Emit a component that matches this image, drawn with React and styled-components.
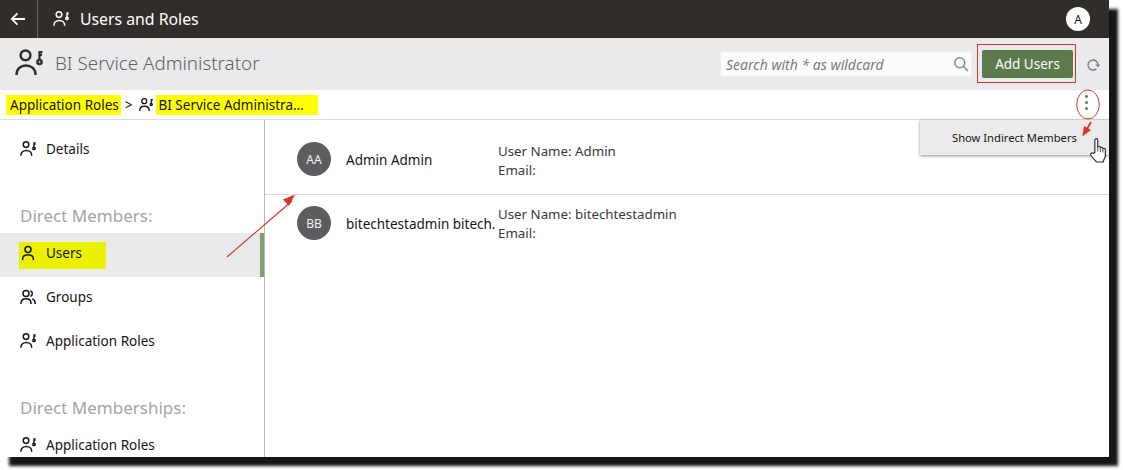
import React from 'react'
import styled, { createGlobalStyle } from 'styled-components'

const Global = createGlobalStyle`
   html, body {
      margin: 0;
      height: 470px;
      background: #fff;
   }
   html {
      overflow: hidden;
   }
   body {
      font-family: "Noto Sans", "Open Sans", sans-serif;
      color: #161513;
   }
`

const UserKey = ({ size = 16, color = 'currentColor', stroke = 1.5 }) => (
   <svg width={size} height={size} viewBox="0 0 16 16" fill="none" stroke={color} strokeWidth={stroke}>
      <circle cx="6" cy="3.6" r="2.8" />
      <path d="M.9 14.8v-.4c0-3 2.3-5 5.4-5s5.4 2 5.4 5v.4" />
      <circle cx="14" cy="7.4" r="1.2" />
      <path d="M14 6V1.2M14 1.8h1.7M14 3.4h1.4" strokeWidth={stroke * 0.9} />
   </svg>
)

const UserIcon = () => (
   <svg width="16" height="16" viewBox="0 0 16 16" fill="none" stroke="currentColor" strokeWidth="1.5">
      <circle cx="8" cy="4.6" r="3" />
      <path d="M2.6 15v-.8c0-2.8 2.4-4.4 5.4-4.4s5.4 1.6 5.4 4.4v.8" />
   </svg>
)

const GroupIcon = () => (
   <svg width="16" height="16" viewBox="0 0 16 16" fill="none" stroke="currentColor" strokeWidth="1.5">
      <circle cx="6" cy="4.6" r="3" />
      <path d="M1 15v-.8c0-2.8 2.2-4.4 5-4.4s5 1.6 5 4.4v.8" />
      <path d="M10.4 1.8a3 3 0 0 1 0 5.6M12.2 9.9c1.7.6 2.9 2 2.9 4.3v.8" />
   </svg>
)

const BackArrow = () => (
   <svg width="16" height="14" viewBox="0 0 16 14" fill="none" stroke="#fff" strokeWidth="1.8">
      <path d="M15 7H2M7.4 1.4 1.8 7l5.6 5.6" />
   </svg>
)

const SearchIcon = () => (
   <svg width="16" height="16" viewBox="0 0 16 16" fill="none" stroke="#8a8d8c" strokeWidth="1.5">
      <circle cx="6.8" cy="6.8" r="5" />
      <path d="m10.4 10.4 4.6 4.6" />
   </svg>
)

const RefreshIcon = () => (
   <svg width="14" height="14" viewBox="0 0 14 14" fill="none" stroke="#7d8387" strokeWidth="1.5">
      <path d="M12 7A5 5 0 1 0 10.4 10.7" />
      <path d="M9.4 6.4h5L11.9 9.6Z" fill="#7d8387" stroke="none" />
   </svg>
)

const Annotations = () => (
   <AnnotationLayer viewBox="0 0 1123 470">
      <rect x="977.5" y="44.5" width="98" height="38" stroke="#d9352b" strokeWidth="1" fill="none" />
      <path d="M227 257 292 201" stroke="#d9352b" strokeWidth="1.2" fill="none" />
      <path d="M295 194.5 283 199.5 289 206Z" fill="#d9352b" />
      <ellipse cx="1088" cy="104.5" rx="11.3" ry="14.5" stroke="#d9352b" strokeWidth="1" fill="none" />
      <path d="M1091 122 1087 129" stroke="#d9352b" strokeWidth="1.8" fill="none" />
      <path d="M1082.3 136.5 1084 126 1091 130Z" fill="#d9352b" />
   </AnnotationLayer>
)

const HandCursor = () => (
   <Hand width="19" height="25" viewBox="0 0 18 24">
      <path
         d="M5.5 14V2.2c0-2.1 2.8-2.1 2.8 0V9c0-1.5 2.5-1.5 2.5 0v1c0-1.5 2.4-1.5 2.4 0v1c0-1.4 2.4-1.4 2.4 0v5.6c0 1.7-.7 2.8-1.4 4.1L13.500 23H7l-5.3-6.2c-1.2-1.7.9-3.3 2.3-2z"
         fill="#fff"
         stroke="#2a2a35"
         strokeWidth="1.1"
      />
      <path d="M8.3 9v4M10.8 10v3.5M13.2 11v3" stroke="#2a2a35" strokeWidth=".8" fill="none" />
   </Hand>
)

export default function App() {
   return (
      <Frame>
         <Global />
         <TopBar>
            <BackButton>
               <BackArrow />
            </BackButton>
            <TopTitle>
               <UserKey />
               <span>Users and Roles</span>
            </TopTitle>
            <Avatar>A</Avatar>
         </TopBar>
         <PageHeader>
            <HeaderIcon>
               <UserKey size={28} color="#312d2a" stroke={1.4} />
            </HeaderIcon>
            <PageTitle>BI Service Administrator</PageTitle>
            <SearchBox>
               <SearchText>Search with * as wildcard</SearchText>
               <SearchIcon />
            </SearchBox>
            <AddButton>Add Users</AddButton>
            <RefreshButton>
               <RefreshIcon />
            </RefreshButton>
         </PageHeader>
         <Breadcrumbs>
            <Marked>Application Roles</Marked>
            <Separator>&gt;</Separator>
            <UserKey size={14} />
            <MarkedLong>BI Service Administra…</MarkedLong>
            <MoreButton>
               <Dot />
               <Dot />
               <Dot />
            </MoreButton>
         </Breadcrumbs>
         <Body>
            <Sidebar>
               <NavItem>
                  <UserKey />
                  <span>Details</span>
               </NavItem>
               <NavHeading $height={60} $top={31}>Direct Members:</NavHeading>
               <NavItem $active>
                  <UsersMark>
                     <UserIcon />
                     <span>Users</span>
                  </UsersMark>
               </NavItem>
               <NavItem>
                  <GroupIcon />
                  <span>Groups</span>
               </NavItem>
               <NavItem>
                  <UserKey />
                  <span>Application Roles</span>
               </NavItem>
               <NavHeading $height={60} $top={31}>Direct Memberships:</NavHeading>
               <NavItem>
                  <UserKey />
                  <span>Application Roles</span>
               </NavItem>
            </Sidebar>
            <Members>
               <MemberRow $top={22}>
                  <Initials>AA</Initials>
                  <MemberName>Admin Admin</MemberName>
                  <MemberInfo>
                     <div>User Name: Admin</div>
                     <div>Email:</div>
                  </MemberInfo>
               </MemberRow>
               <MemberRow $top={11} $last>
                  <Initials>BB</Initials>
                  <MemberName>bitechtestadmin bitech.</MemberName>
                  <MemberInfo $shift={-1}>
                     <div>User Name: bitechtestadmin</div>
                     <div>Email:</div>
                  </MemberInfo>
               </MemberRow>
            </Members>
         </Body>
         <Menu>Show Indirect Members</Menu>
         <Annotations />
         <HandCursor />
      </Frame>
   )
}

const Frame = styled.div`
   position: relative;
   width: 1109px;
   height: 457px;
   overflow: hidden;
   display: flex;
   flex-direction: column;
   background: #fff;
   box-shadow: 9px 9px 3px #161616;
`

const TopBar = styled.header`
   height: 38px;
   flex: none;
   display: flex;
   align-items: center;
   background: #312d2a;
   color: #fff;
`

const BackButton = styled.div`
   width: 36px;
   height: 100%;
   display: flex;
   align-items: center;
   justify-content: center;
   border-right: 1px solid #6b6764;
   padding-right: 1px;
`

const TopTitle = styled.div`
   display: flex;
   align-items: center;
   gap: 11px;
   margin-left: 15px;
   font-size: 15.8px;
   flex: 1;
`

const Avatar = styled.div`
   width: 24px;
   height: 24px;
   margin-right: 19px;
   border-radius: 50%;
   background: #fff;
   color: #161513;
   font-size: 12px;
   display: flex;
   align-items: center;
   justify-content: center;
`

const PageHeader = styled.div`
   height: 52px;
   flex: none;
   display: flex;
   align-items: center;
   background: #e9eaec;
`

const HeaderIcon = styled.div`
   margin: 0 0 3px 15px;
   display: flex;
`

const PageTitle = styled.h1`
   flex: 1;
   margin: 0 0 3px 12px;
   font-size: 18.8px;
   font-weight: 300;
   color: #5f6163;
`

const SearchBox = styled.div`
   width: 252px;
   height: 26px;
   box-sizing: border-box;
   padding: 0 2px 0 5px;
   display: flex;
   align-items: center;
   justify-content: space-between;
   background: #fbfbfb;
   border: 1px solid #eeeeee;
   margin-right: 10px;
`

const SearchText = styled.span`
   font-size: 14px;
   font-style: italic;
   color: #7b7b7b;
`

const AddButton = styled.button`
   width: 91px;
   height: 28px;
   margin-right: 3px;
   padding: 0;
   border: none;
   border-radius: 2px;
   background: #5c7a4c;
   color: #fff;
   font: 400 13.5px "Noto Sans", sans-serif;
`

const RefreshButton = styled.div`
   margin: 2px 9px 0 10px;
   display: flex;
`

const Breadcrumbs = styled.nav`
   height: 29px;
   flex: none;
   display: flex;
   align-items: center;
   padding-left: 6px;
   border-bottom: 1px solid #dcdcdc;
   font-size: 13.5px;
`

const Marked = styled.span`
   background: #ffff00;
   line-height: 20px;
   padding: 0 2px 0 4px;
`

const MarkedLong = styled(Marked)`
   width: 162px;
   margin-left: 3px;
   padding-left: 3px;
   box-sizing: border-box;
`

const Separator = styled.span`
   margin: 0 6px 0 4px;
`

const MoreButton = styled.div`
   margin: 0 21px 4px auto;
   display: flex;
   flex-direction: column;
   gap: 3px;
`

const Dot = styled.i`
   width: 3px;
   height: 3px;
   border-radius: 50%;
   background: #5c7a4c;
`

const Body = styled.div`
   flex: 1;
   min-height: 0;
   display: flex;
`

const Sidebar = styled.aside`
   width: 264px;
   flex: none;
   padding-top: 9px;
   border-right: 1px solid #b9b9b9;
`

const NavItem = styled.div`
   height: 44px;
   box-sizing: border-box;
   display: flex;
   align-items: center;
   gap: 10px;
   padding: 0 0 ${p => (p.$active ? 0 : '5px')} 20px;
   font-size: 13.5px;
   background: ${p => (p.$active ? '#e9eaec' : 'transparent')};
   box-shadow: ${p => (p.$active ? 'inset -4px 0 0 #7f9e70' : 'none')};
`

const UsersMark = styled.span`
   display: flex;
   align-items: center;
   gap: 10px;
   height: 27px;
   width: 87px;
   margin-left: -1px;
   padding: 0 0 5px 1px;
   box-sizing: border-box;
   background: #eaf000;
`

const NavHeading = styled.div`
   height: ${p => p.$height}px;
   box-sizing: border-box;
   padding: ${p => p.$top}px 0 0 20px;
   font-size: 17px;
   line-height: 24px;
   color: #a5a5a5;
`

const Members = styled.main`
   flex: 1;
   min-width: 0;
`

const MemberRow = styled.div`
   height: 75px;
   box-sizing: border-box;
   display: flex;
   padding: ${p => p.$top}px 0 0 32px;
   border-bottom: ${p => (p.$last ? 'none' : '1px solid #dcdcdc')};
`

const Initials = styled.div`
   width: 34px;
   height: 34px;
   flex: none;
   border-radius: 50%;
   background: #5d5d5f;
   color: #f1f1f1;
   font-size: 12px;
   display: flex;
   align-items: center;
   justify-content: center;
`

const MemberName = styled.div`
   width: 152px;
   margin-left: 15px;
   flex: none;
   font-size: 13.5px;
   line-height: 19px;
   padding-top: 9px;
   white-space: nowrap;
`

const MemberInfo = styled.div`
   margin-top: ${p => p.$shift || 0}px;
   font-size: 13.3px;
   line-height: 19px;
   color: #3a3936;
`

const Menu = styled.div`
   position: absolute;
   top: 120px;
   left: 920px;
   width: 189px;
   height: 35px;
   box-sizing: border-box;
   padding-left: 32px;
   display: flex;
   align-items: center;
   background: #ebebeb;
   font-size: 11.2px;
   box-shadow: 0 1px 3px rgba(0, 0, 0, 0.45);
`

const AnnotationLayer = styled.svg`
   position: absolute;
   inset: 0;
   width: 1123px;
   height: 470px;
   pointer-events: none;
`

const Hand = styled.svg`
   position: absolute;
   left: 1089px;
   top: 138px;
`
